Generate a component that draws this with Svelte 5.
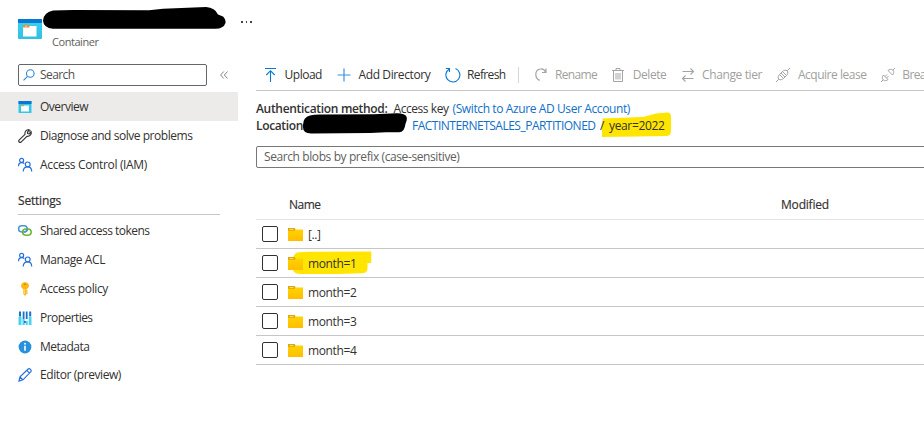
<script>
  const menu = [
    { icon: 'window', label: 'Overview', w: 48, active: true },
    { icon: 'wrench', label: 'Diagnose and solve problems', w: 152.5 },
    { icon: 'people', label: 'Access Control (IAM)', w: 107 }
  ];
  const settings = [
    { icon: 'links', label: 'Shared access tokens', w: 109.5 },
    { icon: 'people', label: 'Manage ACL', w: 65 },
    { icon: 'key', label: 'Access policy', w: 68 },
    { icon: 'bars', label: 'Properties', w: 52.5 },
    { icon: 'info', label: 'Metadata', w: 49.5 },
    { icon: 'pencil', label: 'Editor (preview)', w: 81 }
  ];
  const primary = [
    { icon: 'upload', label: 'Upload', w: 37.5 },
    { icon: 'plus', label: 'Add Directory', w: 72 },
    { icon: 'refresh', label: 'Refresh', w: 38.5 }
  ];
  const secondary = [
    { icon: 'rename', label: 'Rename', w: 42 },
    { icon: 'trash', label: 'Delete', w: 33.5 },
    { icon: 'swap', label: 'Change tier', w: 60 },
    { icon: 'plug', label: 'Acquire lease', w: 68.5 },
    { icon: 'unplug', label: 'Break lease', w: 58 }
  ];
  const rows = [
    { name: '[..]', w: 12.5 },
    { name: 'month=1', w: 48.5, marked: true },
    { name: 'month=2', w: 48.5 },
    { name: 'month=3', w: 48.5 },
    { name: 'month=4', w: 48.5 }
  ];

  // Tracks a label so that it fills the given width.
  function fit(node, width) {
    const natural = node.getBoundingClientRect().width;
    node.style.letterSpacing = (width - natural) / node.textContent.length + 'px';
  }
</script>

{#snippet icon(name)}
  <svg class="icon" viewBox="0 0 16 16" width="16" height="16" fill="none" stroke-width="1">
    {#if name === 'window'}
      <path fill="#32c8ea" d="M1.5 2h13v12h-13z" />
      <path fill="#0878d4" d="M1.5 2h13v3h-13z" />
      <path fill="#fff" d="M4 6.5h8v6H4z" />
      <path fill="#f79433" d="M4 6h3v1.2H4z" />
    {:else if name === 'wrench'}
      <path stroke="#333" stroke-width="1.15" d="M2 12.2 8 6.3C7.5 4 8.8 1.9 11 1.7l1.4.3-2 2.1.2 1.5 1.6.2 2-2c.6 2.6-1.6 5-4.3 4.6L4.1 14.1c-1.2 1-3.2-.7-2.1-1.9z" />
      <path stroke="#333" d="m11.8 4.6 2.2-2.1" />
    {:else if name === 'people'}
      <g stroke="#2870d9" stroke-width="1.2">
        <circle cx="4.6" cy="3.4" r="2" />
        <path d="M1.5 9.2C1.5 7 3 5.7 4.8 5.7c1 0 1.9.4 2.5 1" />
        <circle cx="10.7" cy="7.4" r="2.4" />
        <path d="M6.2 14.5c.1-2.9 2-4.6 4.5-4.6s4 1.8 4 4.6" />
      </g>
    {:else if name === 'links'}
      <rect x="1.600" y="2.700" width="8.600" height="6.200" rx="3.100" stroke="#4a94d4" stroke-width="1.500" />
      <rect x="5.600" y="6" width="8.600" height="6.200" rx="3.100" stroke="#6bb42c" stroke-width="1.500" />
      <path d="M7 8.900h.2c1.900 0 3-1.200 3-3" stroke="#4a94d4" stroke-width="1.500" />
    {:else if name === 'key'}
      <path fill="#fdb714" d="M8 1.2c2.4 0 4 1.6 4 3.5 0 1.600-1 2.800-2.300 3.300v5L8 15l-1.700-2V8C5 7.500 4 6.300 4 4.700c0-1.900 1.600-3.500 4-3.500z" />
      <circle cx="8" cy="3.2" r=".8" fill="#b87900" />
      <path stroke="#ffe06b" d="M7.600 8v5" />
      <path stroke="#e59b00" d="M9.700 10h1M9.700 12h1" />
    {:else if name === 'bars'}
      <path fill="#4bd2f0" d="M1.500 7H4.500v8h-3zM5.500 9h2.200v6H5.500zM8.700 11h2v4h-2zM11.700 7h2.800v8h-2.800z" />
      <path fill="#1773c9" d="M2 1.500h2V6.500H2zM5.700 1.500h1.800V9H5.700zM8.800 1.500h1.800V9H8.800zM12.200 1.500h2v5h-2z" />
      <path fill="#1773c9" d="M7 11h1.800v2H7z" />
    {:else if name === 'info'}
      <circle cx="8" cy="8" r="6.400" fill="#2691dc" />
      <path fill="#fff" d="M7.200 6.700h1.600v5H7.200z" />
      <circle cx="8" cy="4.700" r=".95" fill="#fff" />
    {:else if name === 'pencil'}
      <path stroke="#2870d9" stroke-width="1.200" d="m2 14 1-4.100 7.900-7.700c1.600-1.500 4.400 1 2.800 2.700L6 12.800zM9.800 3.400l2.800 2.800M3 10l2.800 2.700" />
    {:else if name === 'upload'}
      <path stroke="#0878d4" stroke-width="1.100" d="M3 1.500h11M8.500 15V3.500M4.300 8l4.200-4.300L12.700 8" />
    {:else if name === 'plus'}
      <path stroke="#3c91d8" stroke-width="1.200" d="M8 1.500v13M1.500 8h13" />
    {:else if name === 'refresh'}
      <path stroke="#0878d4" stroke-width="1.100" d="M.8 1.500h3.700V5M4.400 1.900A7 7 0 1 0 10.500 1.500" />
    {:else if name === 'rename'}
      <path stroke="#a4a4a4" stroke-width="1.200" d="M13 1.500v4H9M12.800 5.400C11.600 2.800 9.600 1.700 7.500 2 4.500 2.300 2.800 4.700 2.800 7.500c0 2.600 1.500 4.900 4 5.900" />
    {:else if name === 'trash'}
      <path stroke="#a4a4a4" d="M2 3.500h12M6 3.500v-2h4v2M3.500 3.500v11h9v-11M6 6v6.500M8 6v6.500M10 6v6.500" />
    {:else if name === 'swap'}
      <path stroke="#a4a4a4" stroke-width="1.100" d="M2.500 4.500h11M10.500 1.500l3 3-3 3M13.500 11.500h-11M5.500 8.500l-3 3 3 3" />
    {:else if name === 'plug'}
      <path stroke="#a4a4a4" d="m1 15 2.800-2.800M15 1l-2.800 2.800M4.500 7.500l4 4c-1.200 1.200-3.400 1.900-4.700.7S3.300 8.700 4.500 7.500zM7.500 4.500l4 4c1.300-1.200 1.900-3.400.7-4.700S8.700 3.300 7.500 4.500zM4.500 7.500l3-3M8.500 11.500l3-3M6 6l4 4" />
    {:else if name === 'unplug'}
      <path stroke="#a4a4a4" d="m1 15 2-2M15 1l-2 2M3.500 8l4.500 4.500c-1.300 1.300-3.500 1.700-4.800.4S2.200 9.300 3.500 8zM8 3.500 12.500 8c1.300-1.300 1.700-3.500.4-4.800S9.300 2.200 8 3.500zM5 9.500l2-2M6.500 11l2-2" />
    {/if}
  </svg>
{/snippet}

{#snippet nav(items)}
  {#each items as item}
    <li class:active={item.active}>
      {@render icon(item.icon)}<span use:fit={item.w}>{item.label}</span>
    </li>
  {/each}
{/snippet}

{#snippet command(item)}
  <button>{@render icon(item.icon)}<span use:fit={item.w}>{item.label}</span></button>
{/snippet}

<div class="page">
  <header>
    <svg class="logo" width="24" height="20" viewBox="0 0 24 20">
      <defs><linearGradient id="sky" x2="0" y2="1"><stop stop-color="#35d4f5" /><stop offset="1" stop-color="#32bfe2" /></linearGradient></defs>
      <rect width="24" height="20" rx="1" fill="url(#sky)" />
      <path fill="#0878d4" d="M0 0h24v4H0z" />
      <path fill="#fff" d="M5 7h13.500v10.500H5z" />
      <path fill="#f78d2a" d="M5 6h6.500v2.500H5z" />
      <path fill="#ffc58c" d="M7 6.800h2v1H7z" />
    </svg>
    <div class="title">
      <svg width="183" height="23" viewBox="0 0 183 23">
        <path d="M10 3.500 30 3l76 .2L120 1.800 163 0q9 .5 12 7.500l5 2q3 3 2.500 6.500-2 5.800-10 5.800H10q-9.500-1-10-8Q0 6 10 3.500z" />
      </svg>
      <span class="kind" use:fit={46.5}>Container</span>
    </div>
    <span class="more"><i></i><i></i><i></i></span>
  </header>

  <div class="columns">
    <aside>
      <div class="find">
        <div class="box">
          <svg width="12" height="12" viewBox="0 0 12 12" fill="none" stroke="#2b83d2" stroke-width="1.100"><circle cx="7.300" cy="4.500" r="3.800" /><path d="M4.500 7.300.5 11.400" /></svg>
          <span use:fit={34.5}>Search</span>
        </div>
        <svg width="8" height="8" viewBox="0 0 8 8" fill="none" stroke="#777" stroke-width=".9"><path d="M3.800.5.600 4l3.200 3.500M7.500.5 4.300 4l3.200 3.500" /></svg>
      </div>
      <ul>{@render nav(menu)}</ul>
      <h2><span use:fit={43}>Settings</span></h2>
      <ul class="settings">{@render nav(settings)}</ul>
    </aside>

    <main>
      <div class="toolbar">
        {#each primary as item}{@render command(item)}{/each}
        <div class="off">
          {#each secondary as item}{@render command(item)}{/each}
        </div>
      </div>

      <div class="meta">
        <div class="line">
          <b use:fit={131.5}>Authentication method:</b>
          <span class="value" use:fit={55}>Access key</span>
          <a href="#auth" use:fit={177.5}>(Switch to Azure AD User Account)</a>
        </div>
        <div class="line">
          <b use:fit={47}>Location</b>
          <svg class="scrub" width="106" height="22" viewBox="0 0 106 22"><path d="M8 2.500Q13 1 22 1.500l50-.3L94 .3q7-.5 10 2.500 2 3-.5 8-1 9-7 8.500H84l-16 .8-58 .5Q0 21 1 12 1 4 8 2.500z" /></svg>
          <a class="path" href="#root" use:fit={183.5}>FACTINTERNETSALES_PARTITIONED</a>
          <span class="slash">/</span>
          <span class="year">
            <svg width="71" height="26" viewBox="0 0 71 26"><path fill="#ffe500" d="M2 6.500 42 5 55 1.500 66 .5q4 0 4 4V19q0 5-5 5l-29 .5L1 25V10z" /></svg>
            <span use:fit={55.5}>year=2022</span>
          </span>
        </div>
      </div>

      <div class="prefix"><span use:fit={195.5}>Search blobs by prefix (case-sensitive)</span></div>

      <div class="table">
        <div class="row head">
          <div class="name"><span use:fit={31.5}>Name</span></div>
          <span use:fit={48}>Modified</span>
        </div>
        {#each rows as row}
          <div class="row">
            <span class="check"></span>
            {#if row.marked}
              <svg class="mark" width="80" height="24" viewBox="0 0 80 24"><path fill="#ffe500" d="M5 1.500Q12 .5 22 .7L79.300.5V12h-3.800v6q0 4-6 4.300L45 23H9Q2 23 1 19V7q1-4 4-5.500z" /></svg>
            {/if}
            <svg class="folder" width="15" height="13" viewBox="0 0 15 13">
              <defs><linearGradient id="gold" x2="0" y2="1"><stop stop-color="#ffd400" /><stop offset="1" stop-color="#ffbd00" /></linearGradient></defs>
              <path fill="#dfa500" d="M0 0h6.500l1 1v2H0z" />
              <path fill="url(#gold)" d="M0 2.800h7l1-1.300h7V13H0z" />
              <path fill="#f3d78a" d="M1.500 1h4v1h-4z" />
            </svg>
            <span class="label" use:fit={row.w}>{row.name}</span>
          </div>
        {/each}
      </div>
    </main>
  </div>
</div>

<style>
  .page {
    width: 924px;
    height: 431px;
    overflow: hidden;
    background: #fff;
    color: #323130;
    font: 12px/16px "Open Sans", "Noto Sans", sans-serif;
    font-stretch: 94%;
  }
  .page :is(span, b, a) { white-space: nowrap; flex: none; }
  svg { display: block; flex: none; }
  header { display: flex; height: 63px; padding-left: 18px; }
  .logo { margin-top: 19px; }
  .title { margin-top: 7px; width: 199px; }
  .title svg { margin-left: 1px; }
  .kind { display: inline-block; margin: 4px 0 0 10px; font-size: 11px; color: #605e5c; }
  .more { display: flex; gap: 3px; margin-top: 21px; }
  .more i { width: 1.500px; height: 1.500px; background: #444; }
  .columns { display: flex; }
  aside { width: 238px; flex: none; }
  .find { display: flex; align-items: center; gap: 13px; height: 22px; padding: 1px 0 6px 18px; }
  .box { display: flex; align-items: center; gap: 5px; box-sizing: border-box; width: 189px; height: 22px; padding-left: 4px; border: 1px solid #666; border-radius: 2px; }
  .box span { color: #505050; }
  ul { list-style: none; margin: 0; padding: 0; }
  li { display: flex; align-items: center; gap: 7px; height: 29px; padding-left: 17px; }
  .active { background: #edebe9; }
  h2 { display: flex; align-items: flex-end; height: 35px; margin: 0 18px 2px; border-bottom: 1px solid #c8c6c4; font-size: 12px; font-weight: 500; line-height: 27px; -webkit-text-stroke: .2px; }
  .settings li { height: 28.800px; }
  main { width: 668px; flex: none; margin-left: 18px; }
  .toolbar { display: flex; align-items: center; gap: 14px; height: 22px; padding: 1px 0 4px 6px; border-bottom: 1px solid #c8c6c4; }
  .off { display: flex; gap: 13.300px; margin-left: -2px; padding-left: 14px; border-left: 1px solid #d6d6d6; color: #a19f9d; }
  button { display: flex; align-items: center; gap: 6.500px; padding: 0; border: 0; background: none; color: inherit; font: inherit; }
  .meta { padding-top: 9px; }
  .line { display: flex; height: 17px; align-items: center; }
  b { font-weight: 600; }
  .value { margin-left: 6px; }
  a { color: #1070c8; text-decoration: none; margin-left: 4px; }
  .scrub { position: relative; margin: -4px 0 0 -1px; }
  .path { margin-left: 4px; }
  .slash { margin-left: 4.500px; width: 9px; z-index: 1; }
  .year { position: relative; }
  .year svg { position: absolute; left: -8px; top: -6px; }
  .year span { position: relative; display: block; }
  .prefix { display: flex; align-items: center; box-sizing: border-box; width: 690px; height: 22px; margin-top: 12px; padding-left: 7px; border: 1px solid #777; border-radius: 2px; color: #605e5c; }
  .row { position: relative; display: flex; align-items: center; box-sizing: border-box; height: 29px; padding-left: 6px; border-bottom: 1px solid #c8c6c4; }
  .head { height: 52px; padding: 22px 0 0 33px; border-color: #e5e4e2; font-weight: 500; -webkit-text-stroke: .15px; }
  .name { display: flex; width: 492px; }
  .check { box-sizing: border-box; width: 16px; height: 16px; border: 1px solid #323130; border-radius: 2px; }
  .mark { position: absolute; left: 36px; top: 2px; }
  .folder { position: relative; margin-left: 10px; }
  .label { position: relative; margin-left: 5px; padding-top: 2px; }
</style>
